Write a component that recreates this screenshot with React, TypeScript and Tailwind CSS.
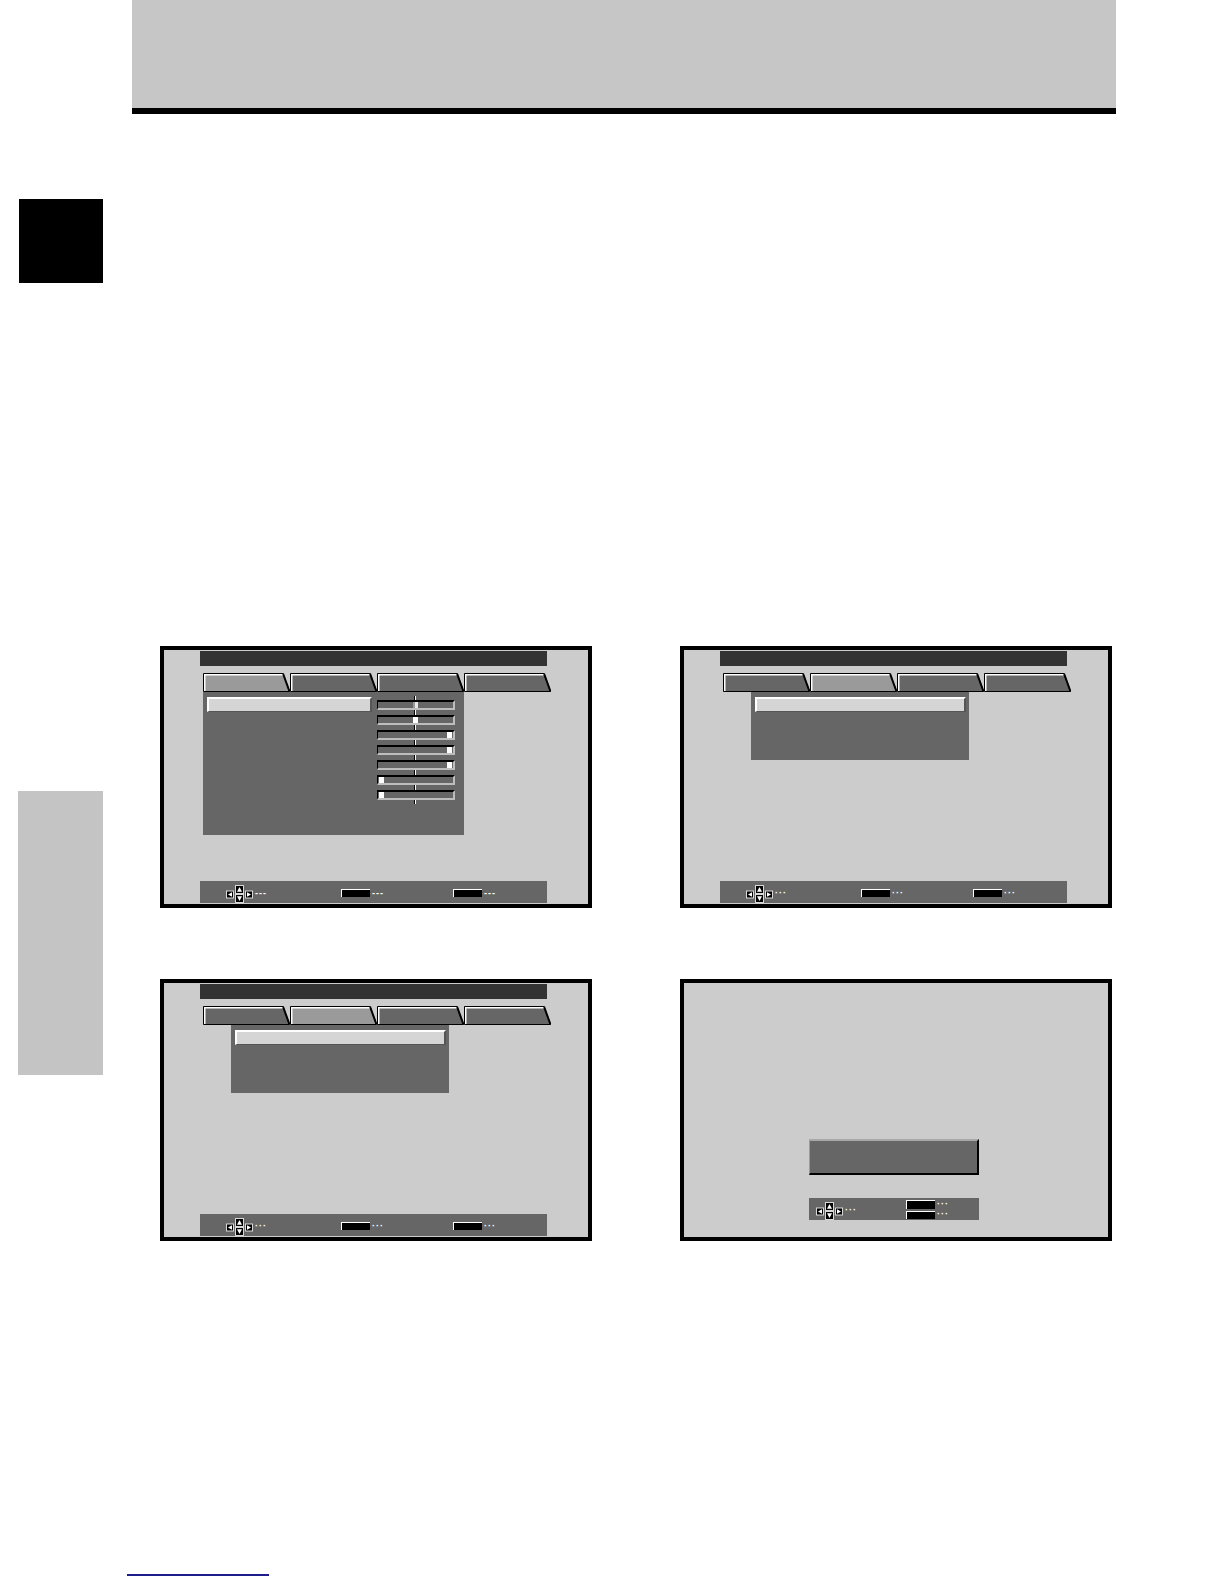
import React from 'react';

type KnobPos = 'start' | 'center' | 'end';

const knobClass: Record<KnobPos, string> = {
  start: 'justify-start pl-px',
  center: 'justify-center',
  end: 'justify-end pr-px',
};

const sliders: KnobPos[] = ['center', 'center', 'end', 'end', 'end', 'start', 'start'];

function Tab({ active }: { active?: boolean }) {
  return (
    <svg width="87" height="19" viewBox="0 0 87 19" className="block shrink-0">
      <path d="M0.5 18.5 V0.5 H80 L86.5 18.5 Z" fill={active ? '#9a9a9a' : '#666666'} stroke="#000" strokeWidth="1" />
      <path d="M80 0.5 L86.5 18.5" stroke="#000" strokeWidth="2" />
      <path d="M1.75 18 V1.75 H79.4" fill="none" stroke="#fff" strokeWidth="1.5" />
    </svg>
  );
}

function Tabs({ active }: { active: number }) {
  return (
    <div className="ml-[39px] mt-[7px] flex h-[19px]">
      {[0, 1, 2, 3].map((i) => (
        <Tab key={i} active={i === active} />
      ))}
    </div>
  );
}

function ArrowPad() {
  // four little keys: left, up, down, right
  return (
    <svg width="27" height="18" viewBox="0 0 27 18" className="block shrink-0">
      <rect x="0.5" y="6" width="7" height="7" fill="#000" stroke="#d8d8d8" />
      <path d="M2 9.5 L6 7.3 V11.7 Z" fill="#fff" />
      <rect x="9.5" y="0.5" width="8" height="8" fill="#000" stroke="#d8d8d8" />
      <path d="M13.5 2 L16 6.8 H11 Z" fill="#fff" />
      <rect x="9.5" y="9.5" width="8" height="8" fill="#000" stroke="#d8d8d8" />
      <path d="M13.5 16 L16 11.2 H11 Z" fill="#fff" />
      <rect x="19.5" y="6" width="7" height="7" fill="#000" stroke="#d8d8d8" />
      <path d="M25 9.5 L21 7.3 V11.7 Z" fill="#fff" />
    </svg>
  );
}

function Dots({ text }: { text: string }) {
  return <span className="ml-[2px] text-[9px] font-bold leading-none tracking-[1px] text-white">{text}</span>;
}

function Key({ tall }: { tall?: boolean }) {
  return <div className={`w-[29px] shrink-0 border-l border-t border-white bg-black ${tall ? 'h-[9px]' : 'h-[8px]'}`} />;
}

function HelpBar({ dots }: { dots: string }) {
  return (
    <div className="mb-px ml-[36px] mt-auto flex h-[22px] w-[347px] bg-[#666666]">
      <div className="ml-[26px] flex w-[115px] items-center pt-[3px]">
        <ArrowPad />
        <Dots text={dots} />
      </div>
      <div className="flex w-[112px] items-center pt-[2px]">
        <Key />
        <Dots text={dots} />
      </div>
      <div className="flex items-center pt-[2px]">
        <Key />
        <Dots text={dots} />
      </div>
    </div>
  );
}

function SelectedRow({ width }: { width: string }) {
  return (
    <div
      className={`h-[15px] ${width} border-b border-l-2 border-r-2 border-t-2 border-b-[#555555] border-l-white border-r-[#555555] border-t-white bg-[#d5d5d5]`}
    />
  );
}

function Screen({ children }: { children: React.ReactNode }) {
  return <div className="flex h-[262px] w-[432px] flex-col border-4 border-black bg-[#cccccc]">{children}</div>;
}

function TitleBar() {
  return <div className="ml-[36px] mt-px h-[15px] w-[347px] bg-[#333333]" />;
}

function PictureScreen() {
  return (
    <Screen>
      <TitleBar />
      <Tabs active={0} />
      <div className="ml-[39px] flex h-[143px] w-[261px] items-start bg-[#666666]">
        <div className="ml-1 mt-[5px]">
          <SelectedRow width="w-[165px]" />
        </div>
        <div className="relative ml-[5px] mt-[8px] flex w-[78px] flex-col gap-[5px]">
          <div className="absolute left-[37px] top-[-4px] h-[108px] w-[2px] border-l border-r border-l-black border-r-white" />
          {sliders.map((p, i) => (
            <div
              key={i}
              className={`relative flex h-[10px] w-[78px] items-center border-b-2 border-l border-r-2 border-t-2 border-b-[#bdbdbd] border-l-black border-r-[#bdbdbd] border-t-black bg-[#666666] ${knobClass[p]}`}
            >
              <div className={`h-[6px] w-[5px] ${i === 0 ? 'border-l-2 border-[#9a9a9a] bg-[#e8e8e8]' : 'bg-white'}`} />
            </div>
          ))}
        </div>
      </div>
      <HelpBar dots="---" />
    </Screen>
  );
}

function ListScreen() {
  return (
    <Screen>
      <TitleBar />
      <Tabs active={1} />
      <div className="ml-[67px] h-[68px] w-[218px] bg-[#666666] pl-1 pt-[5px]">
        <SelectedRow width="w-[211px]" />
      </div>
      <HelpBar dots="···" />
    </Screen>
  );
}

function ConfirmScreen() {
  return (
    <Screen>
      <div className="ml-[125px] mt-[156px] h-[36px] w-[170px] border-b-2 border-l border-r-2 border-t-2 border-b-black border-l-[#9a9a9a] border-r-black border-t-[#a8a8a8] bg-[#666666]" />
      <div className="ml-[125px] mt-[23px] flex h-[22px] w-[170px] bg-[#666666]">
        <div className="ml-[7px] flex w-[90px] items-center pt-[3px]">
          <ArrowPad />
          <Dots text="···" />
        </div>
        <div className="flex flex-col gap-px pt-[2px]">
          <div className="flex items-center">
            <Key tall />
            <Dots text="···" />
          </div>
          <div className="flex items-center">
            <Key />
            <Dots text="···" />
          </div>
        </div>
      </div>
    </Screen>
  );
}

export default function App() {
  return (
    <div className="min-h-[1584px] w-[1224px] bg-white font-['Liberation_Sans',Arial,sans-serif]">
      {/* page header band */}
      <div className="ml-[132px] h-[114px] w-[984px] border-b-[6px] border-black bg-[#c6c6c6]" />

      <div className="flex">
        {/* edge tabs */}
        <div className="w-[132px] shrink-0">
          <div className="ml-[19px] mt-[85px] h-[84px] w-[84px] bg-black" />
          <div className="ml-[18px] mt-[508px] h-[284px] w-[85px] bg-[#c4c4c4]" />
        </div>

        {/* on-screen display figures */}
        <div className="ml-[28px] mt-[532px] grid grid-cols-[432px_432px] gap-x-[88px] gap-y-[71px]">
          <PictureScreen />
          <ListScreen />
          <ListScreen />
          <ConfirmScreen />
        </div>
      </div>

      <div className="ml-[127px] mt-[333px] h-[2px] w-[142px] bg-[#1c1c8c]" />
    </div>
  );
}
